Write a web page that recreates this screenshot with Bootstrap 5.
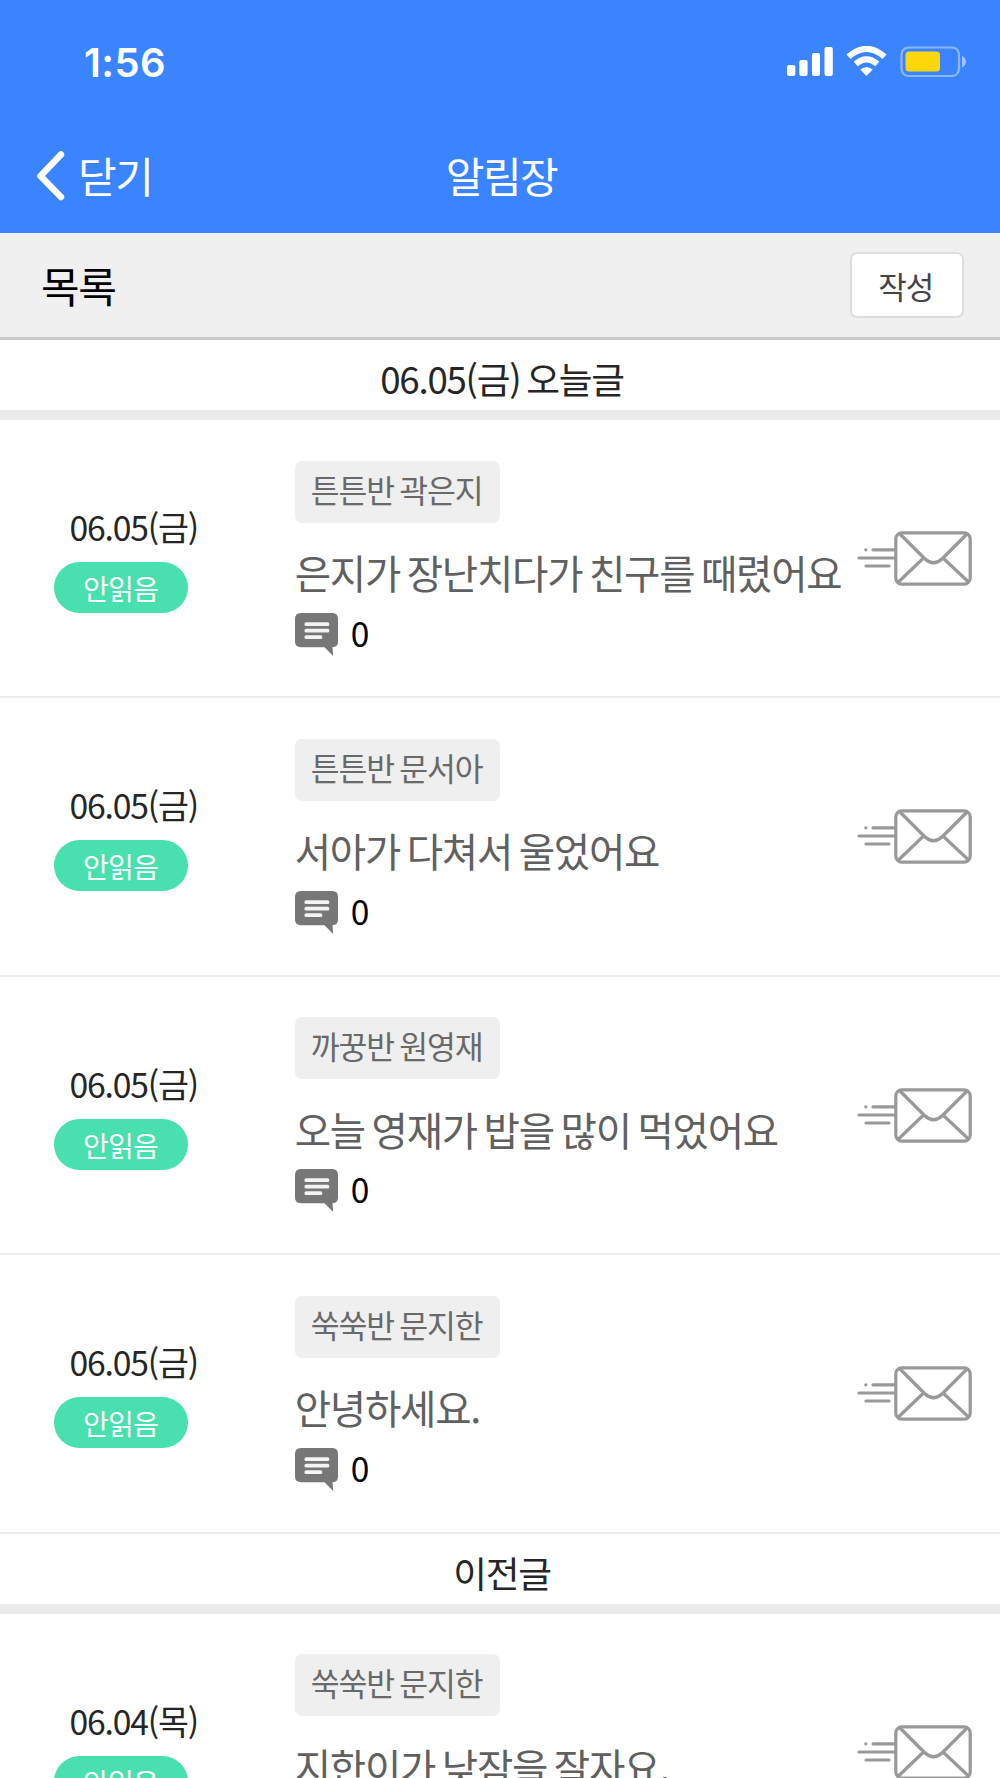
<!DOCTYPE html>
<html lang="ko">
<head>
<meta charset="utf-8">
<meta name="viewport" content="width=device-width, initial-scale=1">
<title>알림장</title>
<link href="https://cdn.jsdelivr.net/npm/bootstrap@5.3.0/dist/css/bootstrap.min.css" rel="stylesheet">
<style>
body{font-family:"Noto Sans CJK KR","Noto Sans",sans-serif;height:1778px;overflow:hidden;color:#262626;white-space:nowrap}
body *{letter-spacing:-.035em;word-spacing:-.08em}
.app-head{background:#3a84ff;height:233px}
.status{height:124px;padding:0 34px 0 84px}
.clock{font:600 40px/1 Inter,sans-serif;letter-spacing:.01em;padding-top:1px}
.topnav{height:102px;font-size:42px;line-height:60px;padding-left:3px}
.back{padding-left:33px;gap:13px}
.listbar{height:107px;background:#f0f0f0;border-bottom:3px solid #cacaca;padding:0 36.5px 0 41px}
.listbar h1{font-size:42px;line-height:60px;color:#000;margin:0}
.write{width:113.5px;height:66px;border:2px solid #ddd;border-radius:7px;background:#fff;color:#444;font-size:31px;line-height:60px;padding:2px 2px 0 0}
.day{height:80px;border-bottom:10px solid #ebebeb;font-size:36.7px;line-height:76px;padding-left:4px}
.entry{height:278.4px;border-bottom:2.5px solid #ebebeb}
.when{width:294.7px;flex:none;padding:82px 0 0 53.5px}
.when time{font-size:33.7px;line-height:50px;padding-left:16px}
.pill{width:134px;height:51px;margin-top:10px;background:#47e0ae;font-size:28.2px;line-height:51px}
.what{padding-top:40.5px}
.child{width:205px;height:62px;border-radius:7px;background:#efefef;color:#696969;font-size:31.4px;line-height:58px;padding-left:16px}
.msg{font-size:39.5px;line-height:62px;letter-spacing:-.031em;padding-top:1px;margin-top:17.5px;color:#606060}
.cmt{height:44px;margin-top:9.5px;gap:12px;font-size:33.5px;line-height:39px;color:#000}
.mail{padding:110px 27px 0 0}
svg{display:block;flex:none}
</style>
</head>
<body class="bg-white">
<svg class="d-none">
  <symbol id="mail" viewBox="0 0 116 56">
    <g fill="none" stroke="#999" stroke-width="3.2" stroke-linecap="round" stroke-linejoin="round">
      <rect x="38.8" y="2.8" width="74.4" height="51.3" rx="6"/>
      <path d="M43.5 4.5 67.5 28.5Q76.5 37 85.5 28.5L109.500 4.500M66 28.500 42 51.500M86.500 28.500 111 51.500M16 19.800H38M2 28H38M9 36H32M8.800 19.800H8.900"/>
    </g>
  </symbol>
  <symbol id="talk" viewBox="0 0 44 44">
    <path d="M6 0H37.500Q43 0 43 6V28.500Q43 34.200 37.500 34.200L38.200 43 29.500 34.200H6Q0 34.200 0 28.500V6Q0 0 6 0Z" fill="#777"/>
    <path d="M11.300 11.200H32.500M11.300 17.700H32.500M11.300 24.200H25.500" stroke="#f4f4f4" stroke-width="3.800" stroke-linecap="round"/>
  </symbol>
</svg>
<header class="app-head text-white">
  <div class="status d-flex align-items-center justify-content-between">
    <span class="clock">1:56</span>
    <svg width="180" height="32" viewBox="0 0 180 32" fill="#fff">
      <rect x="1" y="19" width="8.300" height="11" rx="2"/><rect x="13.300" y="14" width="8.300" height="16" rx="2"/><rect x="26" y="7" width="8" height="23" rx="2"/><rect x="38.500" y="1" width="8.300" height="29" rx="2"/>
      <g fill="none" stroke="#fff" stroke-width="6">
        <path d="M62.500 10.700Q80.500-5 98.500 10.700"/>
        <path d="M69.700 18Q80.500 8.700 91.300 18"/>
      </g>
      <path d="M74.300 23.500Q80.500 18.500 86.700 23.500L80.500 30Z"/>
      <rect x="115.500" y="1.500" width="57.500" height="28.500" rx="7" fill="none" stroke="#fff" stroke-opacity=".42" stroke-width="2.200"/>
      <rect x="119.500" y="5.500" width="34.500" height="20" rx="3.500" fill="#ffd60a"/>
      <path d="M176 10Q180 12 180 15.700T176 21.500Z" fill-opacity=".5"/>
    </svg>
  </div>
  <nav class="topnav row g-0 align-items-center">
    <div class="col">
      <div class="back d-flex align-items-center">
        <svg width="29" height="52" viewBox="0 0 29 52"><path d="M25 5.500 4.500 27 25 48" fill="none" stroke="#fff" stroke-width="6.500" stroke-linecap="round" stroke-linejoin="round"/></svg>
        <span>닫기</span>
      </div>
    </div>
    <div class="col-auto">알림장</div>
    <div class="col"></div>
  </nav>
</header>
<section class="listbar d-flex align-items-center justify-content-between">
  <h1 class="fw-normal">목록</h1>
  <button class="write" type="button">작성</button>
</section>
<main>
  <div class="day text-center">06.05(금) 오늘글</div>
  <article class="entry d-flex">
    <div class="when"><time class="d-block">06.05(금)</time><div class="pill rounded-pill text-white text-center">안읽음</div></div>
    <div class="what flex-grow-1"><div class="child">튼튼반 곽은지</div><div class="msg">은지가 장난치다가 친구를 때렸어요</div><div class="cmt d-flex"><svg width="44" height="44"><use href="#talk"/></svg><span>0</span></div></div>
    <div class="mail"><svg width="116" height="56"><use href="#mail"/></svg></div>
  </article>
  <article class="entry d-flex">
    <div class="when"><time class="d-block">06.05(금)</time><div class="pill rounded-pill text-white text-center">안읽음</div></div>
    <div class="what flex-grow-1"><div class="child">튼튼반 문서아</div><div class="msg">서아가 다쳐서 울었어요</div><div class="cmt d-flex"><svg width="44" height="44"><use href="#talk"/></svg><span>0</span></div></div>
    <div class="mail"><svg width="116" height="56"><use href="#mail"/></svg></div>
  </article>
  <article class="entry d-flex">
    <div class="when"><time class="d-block">06.05(금)</time><div class="pill rounded-pill text-white text-center">안읽음</div></div>
    <div class="what flex-grow-1"><div class="child">까꿍반 원영재</div><div class="msg">오늘 영재가 밥을 많이 먹었어요</div><div class="cmt d-flex"><svg width="44" height="44"><use href="#talk"/></svg><span>0</span></div></div>
    <div class="mail"><svg width="116" height="56"><use href="#mail"/></svg></div>
  </article>
  <article class="entry d-flex">
    <div class="when"><time class="d-block">06.05(금)</time><div class="pill rounded-pill text-white text-center">안읽음</div></div>
    <div class="what flex-grow-1"><div class="child">쑥쑥반 문지한</div><div class="msg">안녕하세요.</div><div class="cmt d-flex"><svg width="44" height="44"><use href="#talk"/></svg><span>0</span></div></div>
    <div class="mail"><svg width="116" height="56"><use href="#mail"/></svg></div>
  </article>
  <div class="day text-center">이전글</div>
  <article class="entry d-flex">
    <div class="when"><time class="d-block">06.04(목)</time><div class="pill rounded-pill text-white text-center">안읽음</div></div>
    <div class="what flex-grow-1"><div class="child">쑥쑥반 문지한</div><div class="msg">지한이가 낮잠을 잘자요.</div></div>
    <div class="mail"><svg width="116" height="56"><use href="#mail"/></svg></div>
  </article>
</main>
<script src="https://cdn.jsdelivr.net/npm/bootstrap@5.3.0/dist/js/bootstrap.bundle.min.js"></script>
</body>
</html>
